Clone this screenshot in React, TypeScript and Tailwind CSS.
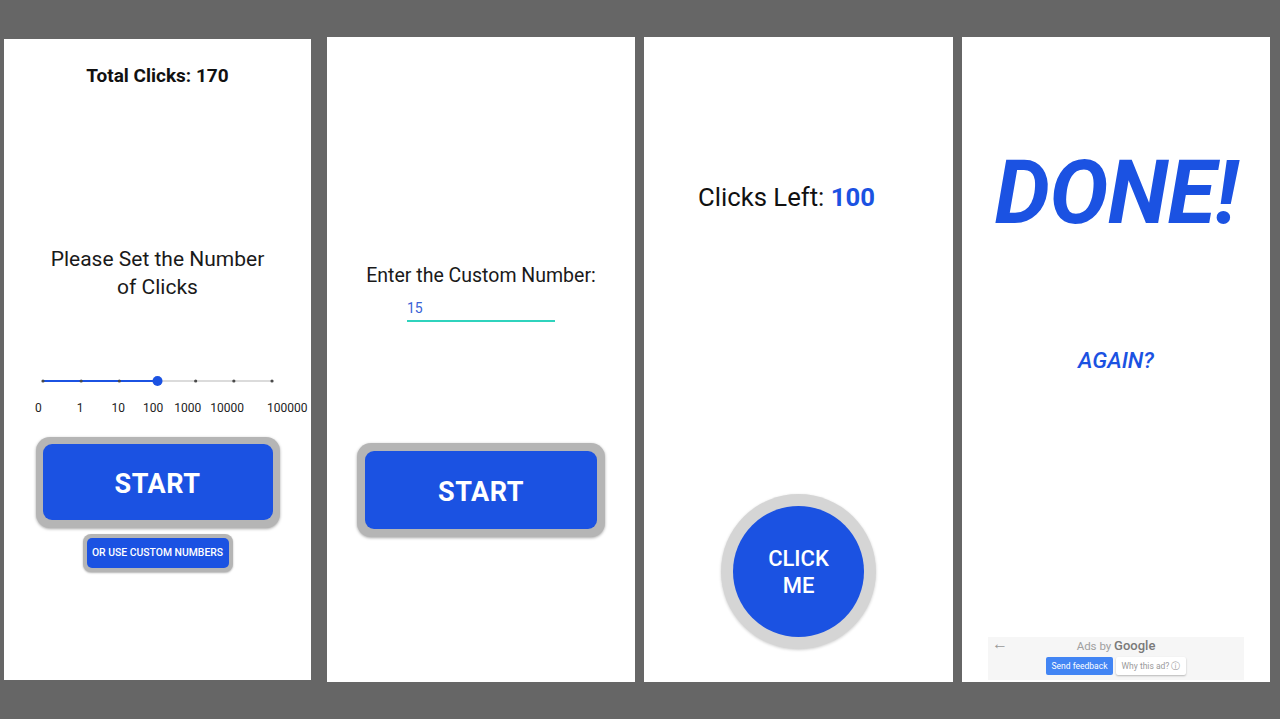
import React from "react";

const BLUE = "#1b52e2";

function Slider() {
  const ticks = [0, 1, 2, 3, 4, 5, 6].map((i) => 5 + i * 38.17);
  return (
    <svg width="240" height="12" viewBox="0 0 240 12" className="ml-[34px] self-start">
      <line x1={ticks[3]} y1="6" x2={ticks[6]} y2="6" stroke="#cfcfcf" strokeWidth="1.5" />
      <line x1={ticks[0]} y1="6" x2={ticks[3]} y2="6" stroke={BLUE} strokeWidth="2" />
      {ticks.map((x, i) => (
        <circle key={i} cx={x} cy="6" r="1.6" fill="#4a4a4a" />
      ))}
      <circle cx={ticks[3]} cy="6" r="5" fill={BLUE} />
    </svg>
  );
}

function BigButton({ label, wide }: { label: string; wide?: boolean }) {
  return (
    <div
      className={
        wide
          ? "w-[248px] h-[94px] p-[8px] rounded-[14px] bg-[#b5b5b5] shadow-[0_1px_3px_rgba(0,0,0,0.35)]"
          : "w-[244px] h-[91px] p-[7px] pb-[8px] rounded-[14px] bg-[#b5b5b5] shadow-[0_1px_3px_rgba(0,0,0,0.35)]"
      }
    >
      <button className="w-full h-full pt-[4px] rounded-[9px] bg-[#1b52e2] text-white font-bold text-[27px] tracking-[0.5px] flex items-center justify-center">
        {label}
      </button>
    </div>
  );
}

function SetPanel() {
  const labels = [
    { t: "0", ml: "ml-0" },
    { t: "1", ml: "ml-[35px]" },
    { t: "10", ml: "ml-[28px]" },
    { t: "100", ml: "ml-[18px]" },
    { t: "1000", ml: "ml-[11px]" },
    { t: "10000", ml: "ml-[9px]" },
    { t: "100000", ml: "ml-[23px]" },
  ];
  return (
    <div className="w-[307px] h-[641px] mt-[39px] bg-white flex flex-col items-center">
      <div className="mt-[25px] text-[19px] leading-[24px] font-bold text-[#111]">Total Clicks: 170</div>
      <div className="mt-[157px] text-[21px] leading-[28px] text-[#1a1a1a] text-center">
        Please Set the Number
        <br />
        of Clicks
      </div>
      <div className="mt-[74px] self-stretch flex">
        <Slider />
      </div>
      <div className="mt-[13px] self-stretch flex pl-[31px] text-[12px] leading-[16px] text-[#222]">
        {labels.map((l) => (
          <span key={l.t} className={l.ml}>
            {l.t}
          </span>
        ))}
      </div>
      <div className="mt-[21px]">
        <BigButton label="START" />
      </div>
      <div className="mt-[6px] w-[150px] h-[38px] p-[4px] rounded-[8px] bg-[#b5b5b5] shadow-[0_1px_2px_rgba(0,0,0,0.3)]">
        <button className="w-full h-full rounded-[5px] bg-[#1b52e2] text-white text-[10.4px] font-medium flex items-center justify-center">
          OR USE CUSTOM NUMBERS
        </button>
      </div>
    </div>
  );
}

function CustomPanel() {
  return (
    <div className="w-[308px] h-[645px] mt-[37px] ml-[16px] bg-white flex flex-col items-center">
      <div className="mt-[227px] text-[19.5px] leading-[24px] text-[#1a1a1a]">Enter the Custom Number:</div>
      <div className="mt-[11px] self-start ml-[80px] w-[148px] pb-[3px] border-b-2 border-[#2fd3bd] text-[14px] leading-[18px] text-[#3a62d6]">
        15
      </div>
      <div className="mt-[121px]">
        <BigButton label="START" wide />
      </div>
    </div>
  );
}

function ClickPanel() {
  return (
    <div className="w-[309px] h-[645px] mt-[37px] ml-[9px] bg-white flex flex-col items-center">
      <div className="mt-[145px] self-start ml-[54px] text-[25.7px] leading-[30px] text-[#111]">
        Clicks Left: <span className="font-bold text-[#1b52e2]">100</span>
      </div>
      <div className="mt-[282px] w-[155px] h-[155px] rounded-full bg-[#d5d5d5] p-[12px] shadow-[0_1px_3px_rgba(0,0,0,0.2)]">
        <button className="w-full h-full rounded-full bg-[#1b52e2] text-white text-[22px] leading-[27px] font-medium flex items-center justify-center text-center">
          CLICK
          <br />
          ME
        </button>
      </div>
    </div>
  );
}

function DonePanel() {
  return (
    <div className="w-[308px] h-[645px] mt-[37px] ml-[9px] bg-white flex flex-col items-center">
      <div className="mt-[112px] text-[88px] leading-[88px] font-bold italic text-[#1b52e2] tracking-[-0.5px]">DONE!</div>
      <div className="mt-[109px] text-[22.5px] leading-[28px] font-medium italic text-[#1b52e2]">AGAIN?</div>
      <div className="mt-auto mb-[2px] w-[256px] h-[43px] bg-[#f6f6f6] flex flex-col items-center relative">
        <span className="absolute left-[4px] top-[-2px] text-[16px] leading-[18px] text-[#999999]">←</span>
        <div className="mt-[2px] text-[11.5px] leading-[14px] text-[#a0a0a0]">
          Ads by <span className="text-[13px] font-medium text-[#7a7a7a]">Google</span>
        </div>
        <div className="mt-[4px] flex gap-[3px]">
          <span className="w-[67px] h-[18px] rounded-[2px] bg-[#4285f4] text-white text-[8.5px] flex items-center justify-center">
            Send feedback
          </span>
          <span className="w-[70px] h-[18px] rounded-[2px] bg-white shadow-[0_1px_2px_rgba(0,0,0,0.25)] text-[#9a9a9a] text-[8.5px] flex items-center justify-center">
            Why this ad? ⓘ
          </span>
        </div>
      </div>
    </div>
  );
}

export default function App() {
  return (
    <div className="w-[1280px] h-[719px] bg-[#666666] flex items-start pl-[4px] overflow-hidden font-['Roboto','Liberation_Sans',sans-serif]">
      <SetPanel />
      <CustomPanel />
      <ClickPanel />
      <DonePanel />
    </div>
  );
}
